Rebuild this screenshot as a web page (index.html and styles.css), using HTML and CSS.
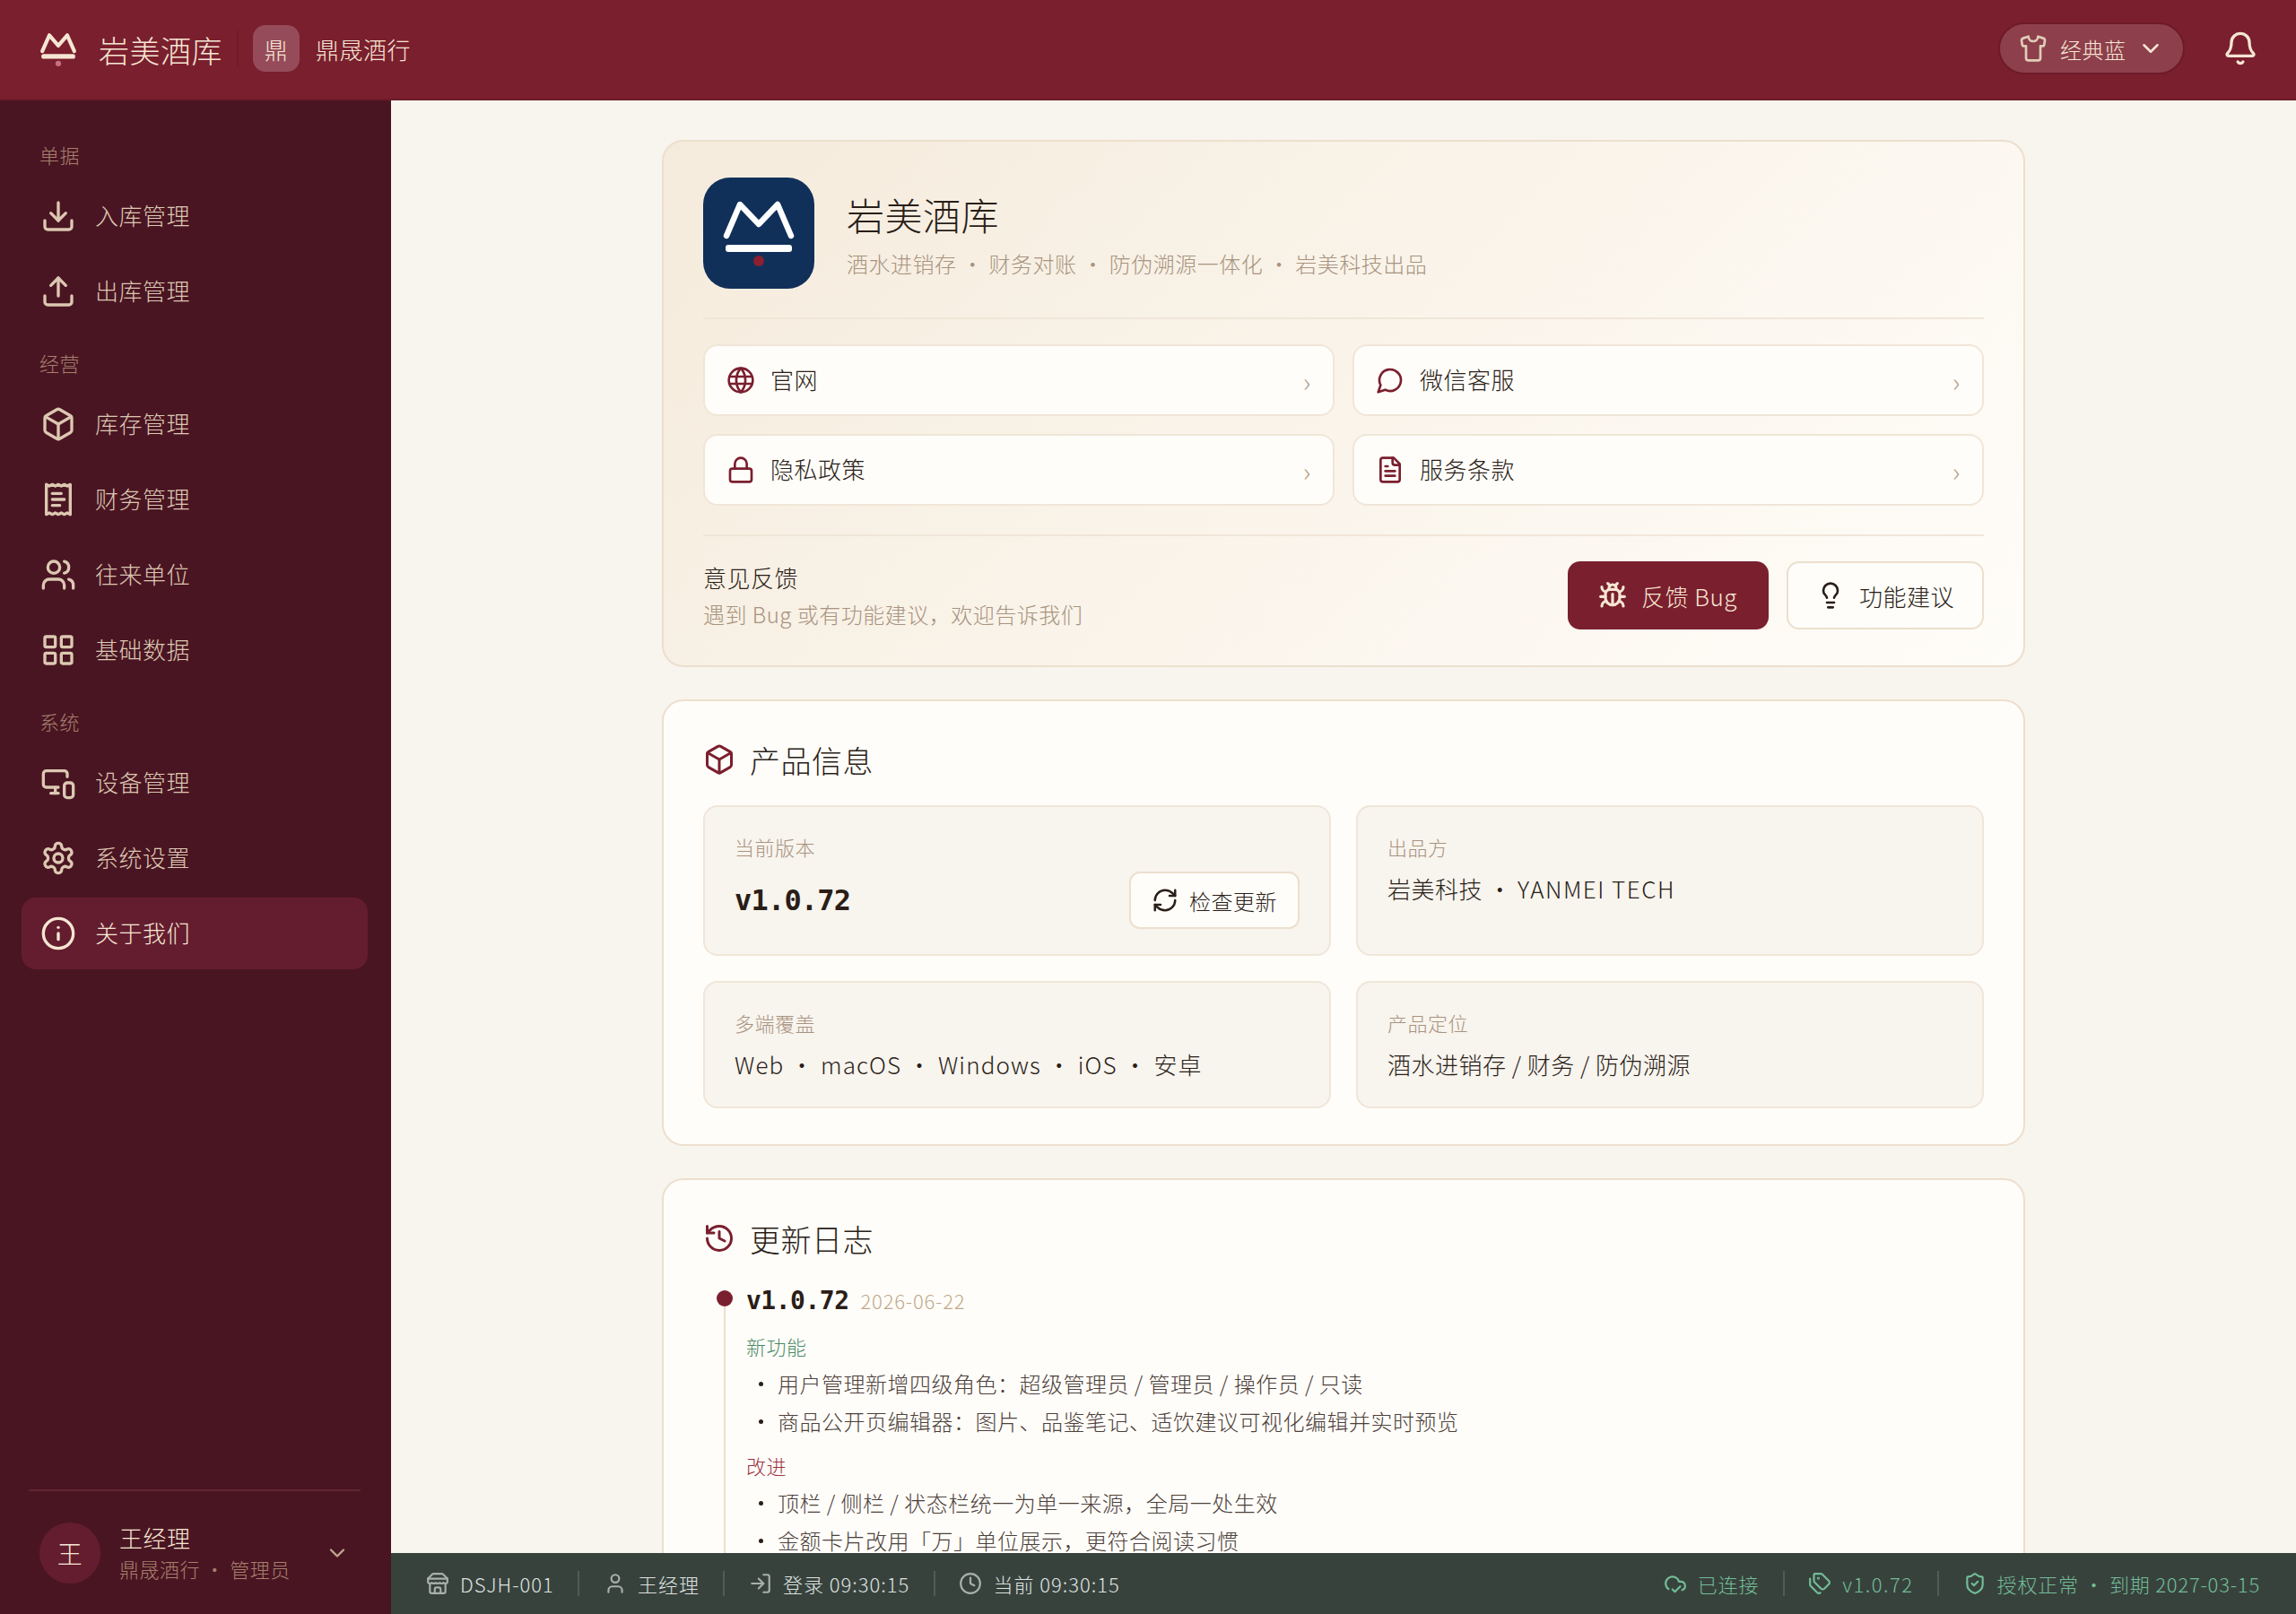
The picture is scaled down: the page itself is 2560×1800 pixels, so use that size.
FILE: index.html
```html
<!DOCTYPE html>
<html lang="zh-CN">
<head>
    <meta charset="UTF-8">
    <meta name="viewport" content="width=device-width, initial-scale=1.0">
    <title>岩美酒库 - 关于我们</title>
    <link rel="stylesheet" href="styles.css">
</head>
<body>
<div class="app">
    <!-- 顶栏 -->
    <header class="topbar">
        <svg class="top-logo" viewBox="0 0 40 40"><path d="M3 23 10.500 6 20 17 29.500 6 37 23" fill="none" stroke="#f5e6d3" stroke-width="4" stroke-linecap="round" stroke-linejoin="round"/><rect x="2" y="26" width="36" height="5" rx="2.500" fill="#f5e6d3"/><circle cx="20" cy="36" r="3" fill="#c87082"/></svg>
        <span class="brand">岩美酒库</span>
        <span class="top-divider"></span>
        <span class="tenant-badge">鼎</span>
        <span class="tenant-name">鼎晟酒行</span>
        <div class="top-right">
            <div class="theme-pill">
                <svg class="ico ico-shirt" viewBox="0 0 24 24"><path d="M20.380 3.460 16 2a4 4 0 0 1-8 0L3.620 3.460a2 2 0 0 0-1.340 2.230l.58 3.470a1 1 0 0 0 .99.84H6v10c0 1.100.9 2 2 2h8a2 2 0 0 0 2-2V10h2.150a1 1 0 0 0 .99-.84l.58-3.470a2 2 0 0 0-1.340-2.230z"/></svg>
                <span>经典蓝</span>
                <svg class="ico ico-chev" viewBox="0 0 24 24"><path d="m6 9 6 6 6-6"/></svg>
            </div>
            <svg class="ico ico-bell" viewBox="0 0 24 24"><path d="M10.268 21a2 2 0 0 0 3.464 0"/><path d="M3.262 15.326A1 1 0 0 0 4 17h16a1 1 0 0 0 .74-1.673C19.410 13.956 18 12.499 18 8A6 6 0 0 0 6 8c0 4.499-1.411 5.956-2.738 7.326"/></svg>
        </div>
    </header>

    <!-- 侧栏 -->
    <aside class="sidebar">
        <nav class="nav">
            <div class="nav-label nav-label-first">单据</div>
            <a class="nav-item"><svg class="ico" viewBox="0 0 24 24"><path d="M21 15v4a2 2 0 0 1-2 2H5a2 2 0 0 1-2-2v-4"/><path d="m7 10 5 5 5-5"/><path d="M12 15V3"/></svg><span>入库管理</span></a>
            <a class="nav-item"><svg class="ico" viewBox="0 0 24 24"><path d="M21 15v4a2 2 0 0 1-2 2H5a2 2 0 0 1-2-2v-4"/><path d="m17 8-5-5-5 5"/><path d="M12 3v12"/></svg><span>出库管理</span></a>
            <div class="nav-label">经营</div>
            <a class="nav-item"><svg class="ico" viewBox="0 0 24 24"><path d="M21 8a2 2 0 0 0-1-1.730l-7-4a2 2 0 0 0-2 0l-7 4A2 2 0 0 0 3 8v8a2 2 0 0 0 1 1.730l7 4a2 2 0 0 0 2 0l7-4A2 2 0 0 0 21 16Z"/><path d="m3.300 7 8.700 5 8.700-5"/><path d="M12 22V12"/></svg><span>库存管理</span></a>
            <a class="nav-item"><svg class="ico" viewBox="0 0 24 24"><path d="M4 2v20l2-1 2 1 2-1 2 1 2-1 2 1 2-1 2 1V2l-2 1-2-1-2 1-2-1-2 1-2-1-2 1Z"/><path d="M14 8H8"/><path d="M16 12H8"/><path d="M13 16H8"/></svg><span>财务管理</span></a>
            <a class="nav-item"><svg class="ico" viewBox="0 0 24 24"><path d="M16 21v-2a4 4 0 0 0-4-4H6a4 4 0 0 0-4 4v2"/><circle cx="9" cy="7" r="4"/><path d="M22 21v-2a4 4 0 0 0-3-3.870"/><path d="M16 3.130a4 4 0 0 1 0 7.750"/></svg><span>往来单位</span></a>
            <a class="nav-item"><svg class="ico" viewBox="0 0 24 24"><rect x="3" y="3" width="7" height="7" rx="1"/><rect x="14" y="3" width="7" height="7" rx="1"/><rect x="14" y="14" width="7" height="7" rx="1"/><rect x="3" y="14" width="7" height="7" rx="1"/></svg><span>基础数据</span></a>
            <div class="nav-label">系统</div>
            <a class="nav-item"><svg class="ico" viewBox="0 0 24 24"><path d="M18 8V6a2 2 0 0 0-2-2H4a2 2 0 0 0-2 2v7a2 2 0 0 0 2 2h8"/><path d="M10 19v-3.960"/><path d="M7 19h5"/><rect x="16" y="12" width="6" height="10" rx="2"/></svg><span>设备管理</span></a>
            <a class="nav-item"><svg class="ico" viewBox="0 0 24 24"><path d="M12.220 2h-.44a2 2 0 0 0-2 2v.18a2 2 0 0 1-1 1.730l-.43.25a2 2 0 0 1-2 0l-.15-.08a2 2 0 0 0-2.730.73l-.22.38a2 2 0 0 0 .73 2.730l.15.1a2 2 0 0 1 1 1.720v.51a2 2 0 0 1-1 1.740l-.15.09a2 2 0 0 0-.73 2.730l.22.38a2 2 0 0 0 2.730.73l.15-.08a2 2 0 0 1 2 0l.43.25a2 2 0 0 1 1 1.730V20a2 2 0 0 0 2 2h.44a2 2 0 0 0 2-2v-.18a2 2 0 0 1 1-1.730l.43-.25a2 2 0 0 1 2 0l.15.08a2 2 0 0 0 2.730-.73l.22-.39a2 2 0 0 0-.73-2.730l-.15-.08a2 2 0 0 1-1-1.740v-.5a2 2 0 0 1 1-1.740l.15-.09a2 2 0 0 0 .73-2.730l-.22-.38a2 2 0 0 0-2.730-.73l-.15.08a2 2 0 0 1-2 0l-.43-.25a2 2 0 0 1-1-1.730V4a2 2 0 0 0-2-2z"/><circle cx="12" cy="12" r="3"/></svg><span>系统设置</span></a>
            <a class="nav-item active"><svg class="ico" viewBox="0 0 24 24"><circle cx="12" cy="12" r="10"/><path d="M12 16v-4"/><path d="M12 8h.01"/></svg><span>关于我们</span></a>
        </nav>
        <div class="user-box">
            <div class="avatar">王</div>
            <div class="user-info">
                <div class="user-name">王经理</div>
                <div class="user-role">鼎晟酒行 · 管理员</div>
            </div>
            <svg class="ico ico-user-chev" viewBox="0 0 24 24"><path d="m6 9 6 6 6-6"/></svg>
        </div>
    </aside>

    <div class="right-col">
        <main class="main">
            <div class="content">
                <!-- 品牌卡片 -->
                <section class="card hero">
                    <div class="hero-head">
                        <svg class="hero-logo" viewBox="0 0 124 124"><rect width="124" height="124" rx="30" fill="#10305a"/><path d="M26 65 41 30 62 52 83 30 98 65" fill="none" stroke="#fff" stroke-width="6.500" stroke-linecap="round" stroke-linejoin="round"/><rect x="25" y="75" width="74" height="8" rx="3" fill="#fff"/><circle cx="62" cy="93" r="6" fill="#8a2030"/></svg>
                        <div>
                            <h1 class="hero-title">岩美酒库</h1>
                            <p class="hero-sub">酒水进销存 · 财务对账 · 防伪溯源一体化 · 岩美科技出品</p>
                        </div>
                    </div>
                    <div class="link-grid">
                        <a class="link-btn"><svg class="ico" viewBox="0 0 24 24"><circle cx="12" cy="12" r="10"/><path d="M12 2a15 15 0 0 0 0 20 15 15 0 0 0 0-20"/><path d="M2.800 9h18.400"/><path d="M2.800 15h18.400"/></svg><span>官网</span><i class="arrow">›</i></a>
                        <a class="link-btn"><svg class="ico" viewBox="0 0 24 24"><path d="M7.900 20A9 9 0 1 0 4 16.100L2 22Z"/></svg><span>微信客服</span><i class="arrow">›</i></a>
                        <a class="link-btn"><svg class="ico" viewBox="0 0 24 24"><rect x="3" y="11" width="18" height="11" rx="2"/><path d="M7 11V7a5 5 0 0 1 10 0v4"/></svg><span>隐私政策</span><i class="arrow">›</i></a>
                        <a class="link-btn"><svg class="ico" viewBox="0 0 24 24"><path d="M15 2H6a2 2 0 0 0-2 2v16a2 2 0 0 0 2 2h12a2 2 0 0 0 2-2V7Z"/><path d="M14 2v4a2 2 0 0 0 2 2h4"/><path d="M10 9H8"/><path d="M16 13H8"/><path d="M16 17H8"/></svg><span>服务条款</span><i class="arrow">›</i></a>
                    </div>
                    <div class="feedback">
                        <div class="feedback-text">
                            <div class="feedback-title">意见反馈</div>
                            <div class="feedback-sub">遇到 Bug 或有功能建议，欢迎告诉我们</div>
                        </div>
                        <button class="btn btn-primary"><svg class="ico" viewBox="0 0 24 24"><path d="m8 2 1.880 1.880"/><path d="M14.120 3.880 16 2"/><path d="M9 7.130v-1a3.003 3.003 0 1 1 6 0v1"/><path d="M12 20c-3.300 0-6-2.700-6-6v-3a4 4 0 0 1 4-4h4a4 4 0 0 1 4 4v3c0 3.300-2.700 6-6 6"/><path d="M12 20v-9"/><path d="M6.530 9C4.600 8.800 3 7.100 3 5"/><path d="M6 13H2"/><path d="M3 21c0-2.100 1.700-3.900 3.800-4"/><path d="M20.970 5c0 2.100-1.600 3.800-3.500 4"/><path d="M22 13h-4"/><path d="M17.200 17c2.100.1 3.800 1.900 3.800 4"/></svg>反馈 Bug</button>
                        <button class="btn btn-plain"><svg class="ico" viewBox="0 0 24 24"><path d="M15 14c.2-1 .7-1.700 1.500-2.500 1-.9 1.500-2.200 1.500-3.500A6 6 0 0 0 6 8c0 1 .2 2.200 1.500 3.500.7.7 1.300 1.500 1.500 2.500"/><path d="M9 18h6"/><path d="M10 22h4"/></svg>功能建议</button>
                    </div>
                </section>

                <!-- 产品信息 -->
                <section class="card">
                    <h2 class="card-title"><svg class="ico" viewBox="0 0 24 24"><path d="M21 8a2 2 0 0 0-1-1.730l-7-4a2 2 0 0 0-2 0l-7 4A2 2 0 0 0 3 8v8a2 2 0 0 0 1 1.730l7 4a2 2 0 0 0 2 0l7-4A2 2 0 0 0 21 16Z"/><path d="m3.300 7 8.700 5 8.700-5"/><path d="M12 22V12"/></svg>产品信息</h2>
                    <div class="info-grid">
                        <div class="info-tile">
                            <div class="info-label">当前版本</div>
                            <div class="version-row">
                                <span class="version">v1.0.72</span>
                                <button class="btn-check"><svg class="ico" viewBox="0 0 24 24"><path d="M3 12a9 9 0 0 1 9-9 9.750 9.750 0 0 1 6.740 2.740L21 8"/><path d="M21 3v5h-5"/><path d="M21 12a9 9 0 0 1-9 9 9.750 9.750 0 0 1-6.740-2.740L3 16"/><path d="M8 16H3v5"/></svg>检查更新</button>
                            </div>
                        </div>
                        <div class="info-tile">
                            <div class="info-label">出品方</div>
                            <div class="info-value">岩美科技 · <span class="latin-wide">YANMEI TECH</span></div>
                        </div>
                        <div class="info-tile">
                            <div class="info-label">多端覆盖</div>
                            <div class="info-value info-value-wide">Web · macOS · Windows · iOS · 安卓</div>
                        </div>
                        <div class="info-tile">
                            <div class="info-label">产品定位</div>
                            <div class="info-value">酒水进销存 / 财务 / 防伪溯源</div>
                        </div>
                    </div>
                </section>

                <!-- 更新日志 -->
                <section class="card">
                    <h2 class="card-title"><svg class="ico" viewBox="0 0 24 24"><path d="M3 12a9 9 0 1 0 9-9 9.750 9.750 0 0 0-6.740 2.740L3 8"/><path d="M3 3v5h5"/><path d="M12 7v5l4 2"/></svg>更新日志</h2>
                    <div class="log-entry">
                        <span class="log-dot"></span>
                        <div class="log-head"><span class="log-ver">v1.0.72</span><span class="log-date">2026-06-22</span></div>
                        <div class="log-tag tag-new">新功能</div>
                        <ul class="log-list">
                            <li>用户管理新增四级角色：超级管理员 / 管理员 / 操作员 / 只读</li>
                            <li>商品公开页编辑器：图片、品鉴笔记、适饮建议可视化编辑并实时预览</li>
                        </ul>
                        <div class="log-tag tag-fix">改进</div>
                        <ul class="log-list">
                            <li>顶栏 / 侧栏 / 状态栏统一为单一来源，全局一处生效</li>
                            <li>金额卡片改用「万」单位展示，更符合阅读习惯</li>
                        </ul>
                    </div>
                </section>
            </div>
        </main>

        <!-- 状态栏 -->
        <footer class="statusbar">
            <span class="st-item"><svg class="ico" viewBox="0 0 24 24"><path d="m2 7 4.410-4.410A2 2 0 0 1 7.830 2h8.340a2 2 0 0 1 1.420.59L22 7"/><path d="M4 12v8a2 2 0 0 0 2 2h12a2 2 0 0 0 2-2v-8"/><path d="M15 22v-4a2 2 0 0 0-2-2h-2a2 2 0 0 0-2 2v4"/><path d="M2 7h20"/><path d="M22 7v3a2 2 0 0 1-2 2 2.700 2.700 0 0 1-1.590-.63.7.7 0 0 0-.82 0A2.700 2.700 0 0 1 16 12a2.700 2.700 0 0 1-1.590-.63.7.7 0 0 0-.82 0A2.700 2.700 0 0 1 12 12a2.700 2.700 0 0 1-1.590-.63.7.7 0 0 0-.82 0A2.700 2.700 0 0 1 8 12a2.700 2.700 0 0 1-1.590-.63.7.7 0 0 0-.82 0A2.700 2.700 0 0 1 4 12a2 2 0 0 1-2-2V7"/></svg>DSJH-001</span>
            <span class="st-sep"></span>
            <span class="st-item"><svg class="ico" viewBox="0 0 24 24"><path d="M19 21v-2a4 4 0 0 0-4-4H9a4 4 0 0 0-4 4v2"/><circle cx="12" cy="7" r="4"/></svg>王经理</span>
            <span class="st-sep"></span>
            <span class="st-item"><svg class="ico" viewBox="0 0 24 24"><path d="M15 3h4a2 2 0 0 1 2 2v14a2 2 0 0 1-2 2h-4"/><path d="m10 17 5-5-5-5"/><path d="M15 12H3"/></svg>登录 09:30:15</span>
            <span class="st-sep"></span>
            <span class="st-item"><svg class="ico" viewBox="0 0 24 24"><circle cx="12" cy="12" r="10"/><path d="M12 6v6l4 2"/></svg>当前 09:30:15</span>
            <span class="st-spacer"></span>
            <span class="st-item st-ok"><svg class="ico" viewBox="0 0 24 24"><path d="m17 15-5.500 5.500L9 18"/><path d="M5 17.743A7 7 0 1 1 15.710 10h1.790a4.500 4.500 0 0 1 1.500 8.742"/></svg>已连接</span>
            <span class="st-sep"></span>
            <span class="st-item st-ok st-ver"><svg class="ico" viewBox="0 0 24 24"><path d="M13.172 2a2 2 0 0 1 1.414.586l6.710 6.710a2.400 2.400 0 0 1 0 3.408l-4.592 4.592a2.400 2.400 0 0 1-3.408 0l-6.710-6.710A2 2 0 0 1 6 9.172V3a1 1 0 0 1 1-1z"/><path d="M2 7v6.172a2 2 0 0 0 .586 1.414l6.710 6.710a2.400 2.400 0 0 0 3.191.193"/><circle cx="10.500" cy="6.500" r=".5"/></svg>v1.0.72</span>
            <span class="st-sep"></span>
            <span class="st-item st-ok"><svg class="ico" viewBox="0 0 24 24"><path d="M20 13c0 5-3.500 7.500-7.660 8.950a1 1 0 0 1-.67-.01C7.500 20.500 4 18 4 13V6a1 1 0 0 1 1-1c2 0 4.500-1.200 6.240-2.720a1.170 1.170 0 0 1 1.520 0C14.510 3.810 17 5 19 5a1 1 0 0 1 1 1z"/><path d="m9 12 2 2 4-4"/></svg>授权正常 · 到期 2027-03-15</span>
        </footer>
    </div>
</div>
</body>
</html>
```

FILE: styles.css
```css
*{
    margin: 0;
    padding: 0;
    box-sizing: border-box;
}
html, body{
    height: 100%;
    overflow: hidden;
}
body{
    font-family: "Noto Sans CJK SC", "Noto Sans", sans-serif;
    font-weight: 300;
    letter-spacing: .5px;
    color: #2a1e18;
    background: #f8f4ee;
}
button{
    font: inherit;
    letter-spacing: inherit;
    cursor: pointer;
}
.ico{
    flex: none;
    fill: none;
    stroke: currentColor;
    stroke-width: 2;
    stroke-linecap: round;
    stroke-linejoin: round;
}

.app{
    height: 100vh;
    display: grid;
    grid-template-columns: 436px 1fr;
    grid-template-rows: 112px 1fr;
}

/* 顶栏 */
.topbar{
    grid-column: 1 / 3;
    display: flex;
    align-items: center;
    padding: 0 42px 2px 44px;
    background: #7a1f2e;
    border-bottom: 2px solid #6e1b29;
    color: #f5e6d3;
}
.top-logo{
    width: 42px;
    height: 42px;
}
.brand{
    margin: 4px 0 0 24px;
    font-size: 34px;
    line-height: 1;
}
.top-divider{
    width: 2px;
    height: 40px;
    margin: 0 16px;
    background: #6e1b29;
}
.tenant-badge{
    width: 52px;
    height: 52px;
    display: flex;
    align-items: center;
    justify-content: center;
    border-radius: 14px;
    background: #964b5a;
    font-size: 26px;
}
.tenant-name{
    margin-left: 18px;
    font-size: 26px;
}
.top-right{
    margin-left: auto;
    display: flex;
    align-items: center;
    gap: 42px;
}
.theme-pill{
    width: 208px;
    height: 58px;
    display: flex;
    align-items: center;
    padding-left: 21px;
    border: 2px solid #6e1b29;
    border-radius: 29px;
    background: #8d3f4c;
    font-size: 24px;
}
.ico-shirt{
    width: 32px;
    height: 32px;
    color: #e0cdb8;
}
.theme-pill span{
    margin-left: 14px;
}
.ico-chev{
    width: 30px;
    height: 30px;
    margin-left: 12px;
}
.ico-bell{
    width: 40px;
    height: 40px;
}

/* 侧栏 */
.sidebar{
    display: flex;
    flex-direction: column;
    background: #4a1522;
    overflow: hidden;
}
.nav{
    flex: 1;
    display: flex;
    flex-direction: column;
    gap: 4px;
    padding: 0 26px 0 24px;
}
.nav-label{
    height: 32px;
    margin: 20px 0 8px;
    padding-left: 20px;
    font-size: 22px;
    line-height: 30px;
    color: #a5806e;
}
.nav-label-first{
    margin-top: 45px;
}
.nav-item{
    height: 80px;
    display: flex;
    align-items: center;
    gap: 21px;
    padding-left: 21px;
    border-radius: 16px;
    font-size: 26px;
    color: #dcc8b2;
}
.nav-item span{
    margin-bottom: 3px;
}
.nav-item .ico{
    width: 40px;
    height: 40px;
}
.nav-item.active{
    background: #641d2f;
    color: #f5e6d3;
}
.user-box{
    height: 139px;
    margin: 0 34px 0 32px;
    display: flex;
    align-items: center;
    padding: 0 12px;
    border-top: 2px solid #5f2433;
}
.avatar{
    width: 68px;
    height: 68px;
    display: flex;
    align-items: center;
    justify-content: center;
    border-radius: 50%;
    background: #641d2f;
    font-size: 28px;
    color: #f5e6d3;
}
.user-info{
    flex: 1;
    margin-left: 21px;
}
.user-name{
    font-size: 26px;
    line-height: 34px;
    color: #f5e6d3;
}
.user-role{
    font-size: 22px;
    line-height: 34px;
    color: #a5806e;
}
.ico-user-chev{
    width: 28px;
    height: 28px;
    color: #c0a88c;
}

/* 主区域 */
.right-col{
    display: flex;
    flex-direction: column;
    min-height: 0;
    overflow: hidden;
}
.main{
    flex: 1;
    min-height: 0;
    overflow: hidden;
    padding-top: 44px;
}
.content{
    width: 1520px;
    margin: 0 auto;
    display: flex;
    flex-direction: column;
    gap: 36px;
}
.card{
    padding: 40px 44px;
    border: 2px solid #ecdfcd;
    border-radius: 24px;
    background: #fffdf9;
}
.hero{
    background: linear-gradient(135deg, #f5ebdc 0%, #fffdf9 100%);
}
.hero-head{
    display: flex;
    align-items: center;
    gap: 36px;
    padding-bottom: 32px;
    border-bottom: 2px solid #f0e6d8;
}
.hero-logo{
    width: 124px;
    height: 124px;
    flex: none;
}
.hero-title{
    font-size: 42px;
    font-weight: 300;
    line-height: 60px;
}
.hero-sub{
    margin-top: 8px;
    font-size: 24px;
    line-height: 34px;
    color: #a8937f;
}
.link-grid{
    display: grid;
    grid-template-columns: 1fr 1fr;
    gap: 20px;
    margin-top: 28px;
    padding-bottom: 32px;
    border-bottom: 2px solid #f0e6d8;
}
.link-btn{
    height: 80px;
    display: flex;
    align-items: center;
    gap: 17px;
    padding: 0 24px;
    border: 2px solid #f0e6d8;
    border-radius: 16px;
    background: #fffdf9;
    font-size: 26px;
}
.link-btn .ico{
    width: 32px;
    height: 32px;
    color: #7a1f2e;
}
.link-btn span{
    flex: 1;
    margin-bottom: 3px;
}
.arrow{
    font-style: normal;
    font-size: 30px;
    color: #b8a48e;
}
.feedback{
    display: flex;
    align-items: center;
    gap: 20px;
    margin-top: 28px;
}
.feedback-text{
    flex: 1;
}
.feedback-title{
    font-size: 26px;
    line-height: 36px;
}
.feedback-sub{
    margin-top: 6px;
    font-size: 24px;
    line-height: 34px;
    color: #a8937f;
}
.btn{
    height: 76px;
    display: flex;
    align-items: center;
    gap: 16px;
    border-radius: 14px;
    font-size: 26px;
    font-weight: 300;
}
.btn .ico{
    width: 32px;
    height: 32px;
}
.btn-primary{
    padding: 0 35px 0 34px;
    border: none;
    background: #7a1f2e;
    color: #f5e6d3;
}
.btn-primary .ico{
    stroke-width: 2.400;
}
.btn-plain{
    padding: 0 31px;
    border: 2px solid #ecdfcd;
    background: #fffdf9;
    color: #2a1e18;
}
.card-title{
    height: 50px;
    display: flex;
    align-items: center;
    gap: 16px;
    font-size: 34px;
    font-weight: 300;
}
.card-title .ico{
    width: 36px;
    height: 36px;
    color: #7a1f2e;
}
.info-grid{
    display: grid;
    grid-template-columns: 1fr 1fr;
    gap: 28px;
    margin-top: 26px;
}
.info-tile{
    padding: 30px 33px 28px;
    border: 2px solid #f0e6d8;
    border-radius: 16px;
    background: #f8f4ee;
}
.info-label{
    font-size: 22px;
    line-height: 28px;
    color: #a8937f;
}
.info-value{
    margin-top: 14px;
    font-size: 26px;
    line-height: 38px;
}
.info-value-wide{
    letter-spacing: 1.100px;
}
.latin-wide{
    letter-spacing: 1.500px;
}
.version-row{
    display: flex;
    align-items: center;
    justify-content: space-between;
    margin-top: 14px;
}
.version{
    font-family: "DejaVu Sans Mono", monospace;
    font-weight: 700;
    font-size: 32px;
    letter-spacing: -.8px;
}
.btn-check{
    height: 64px;
    display: flex;
    align-items: center;
    gap: 12px;
    padding: 0 23px;
    border: 2px solid #ecdfcd;
    border-radius: 12px;
    background: #fffdf9;
    font-size: 24px;
    font-weight: 300;
    color: #2a1e18;
}
.btn-check .ico{
    width: 30px;
    height: 30px;
}

/* 更新日志 */
.log-entry{
    display: flow-root;
    position: relative;
    margin: 33px 0 0 23px;
    padding-left: 23px;
    border-left: 2px solid #ecdfcd;
}
.log-dot{
    position: absolute;
    left: -10px;
    top: 0;
    width: 18px;
    height: 18px;
    border-radius: 50%;
    background: #7a1f2e;
}
.log-head{
    display: flex;
    align-items: baseline;
    gap: 13px;
    margin-top: -9px;
    line-height: 40px;
}
.log-ver{
    font-family: "DejaVu Sans Mono", monospace;
    font-weight: 700;
    font-size: 28px;
    letter-spacing: -.5px;
}
.log-date{
    font-size: 22px;
    letter-spacing: .8px;
    color: #c0a88c;
}
.log-tag{
    margin-top: 13px;
    font-size: 22px;
    line-height: 30px;
}
.tag-new{
    margin-top: 15px;
    color: #4a8a68;
}
.tag-fix{
    color: #9a3040;
}
.log-list{
    list-style: none;
    margin-top: 6px;
}
.log-list li{
    display: flex;
    align-items: center;
    gap: 16px;
    font-size: 24px;
    line-height: 42px;
    color: #4c403a;
}
.log-list li::before{
    content: "";
    width: 5px;
    height: 5px;
    margin-left: 14px;
    border-radius: 50%;
    background: #2a1e18;
}

/* 状态栏 */
.statusbar{
    height: 68px;
    flex: none;
    display: flex;
    align-items: center;
    gap: 26.500px;
    padding: 0 40px 0 39px;
    background: #38423d;
    font-size: 22px;
    letter-spacing: 1px;
    color: #dfe3e0;
}
.st-item{
    display: flex;
    align-items: center;
    gap: 12px;
}
.st-item .ico{
    width: 26px;
    height: 26px;
    color: #a8b0ac;
}
.st-ok{
    letter-spacing: .8px;
}
.st-ver{
    letter-spacing: 1.500px;
}
.st-ok,
.st-ok .ico{
    color: #72bd98;
}
.st-sep{
    width: 2px;
    height: 28px;
    background: #525b56;
}
.st-spacer{
    flex: 1;
}
```
